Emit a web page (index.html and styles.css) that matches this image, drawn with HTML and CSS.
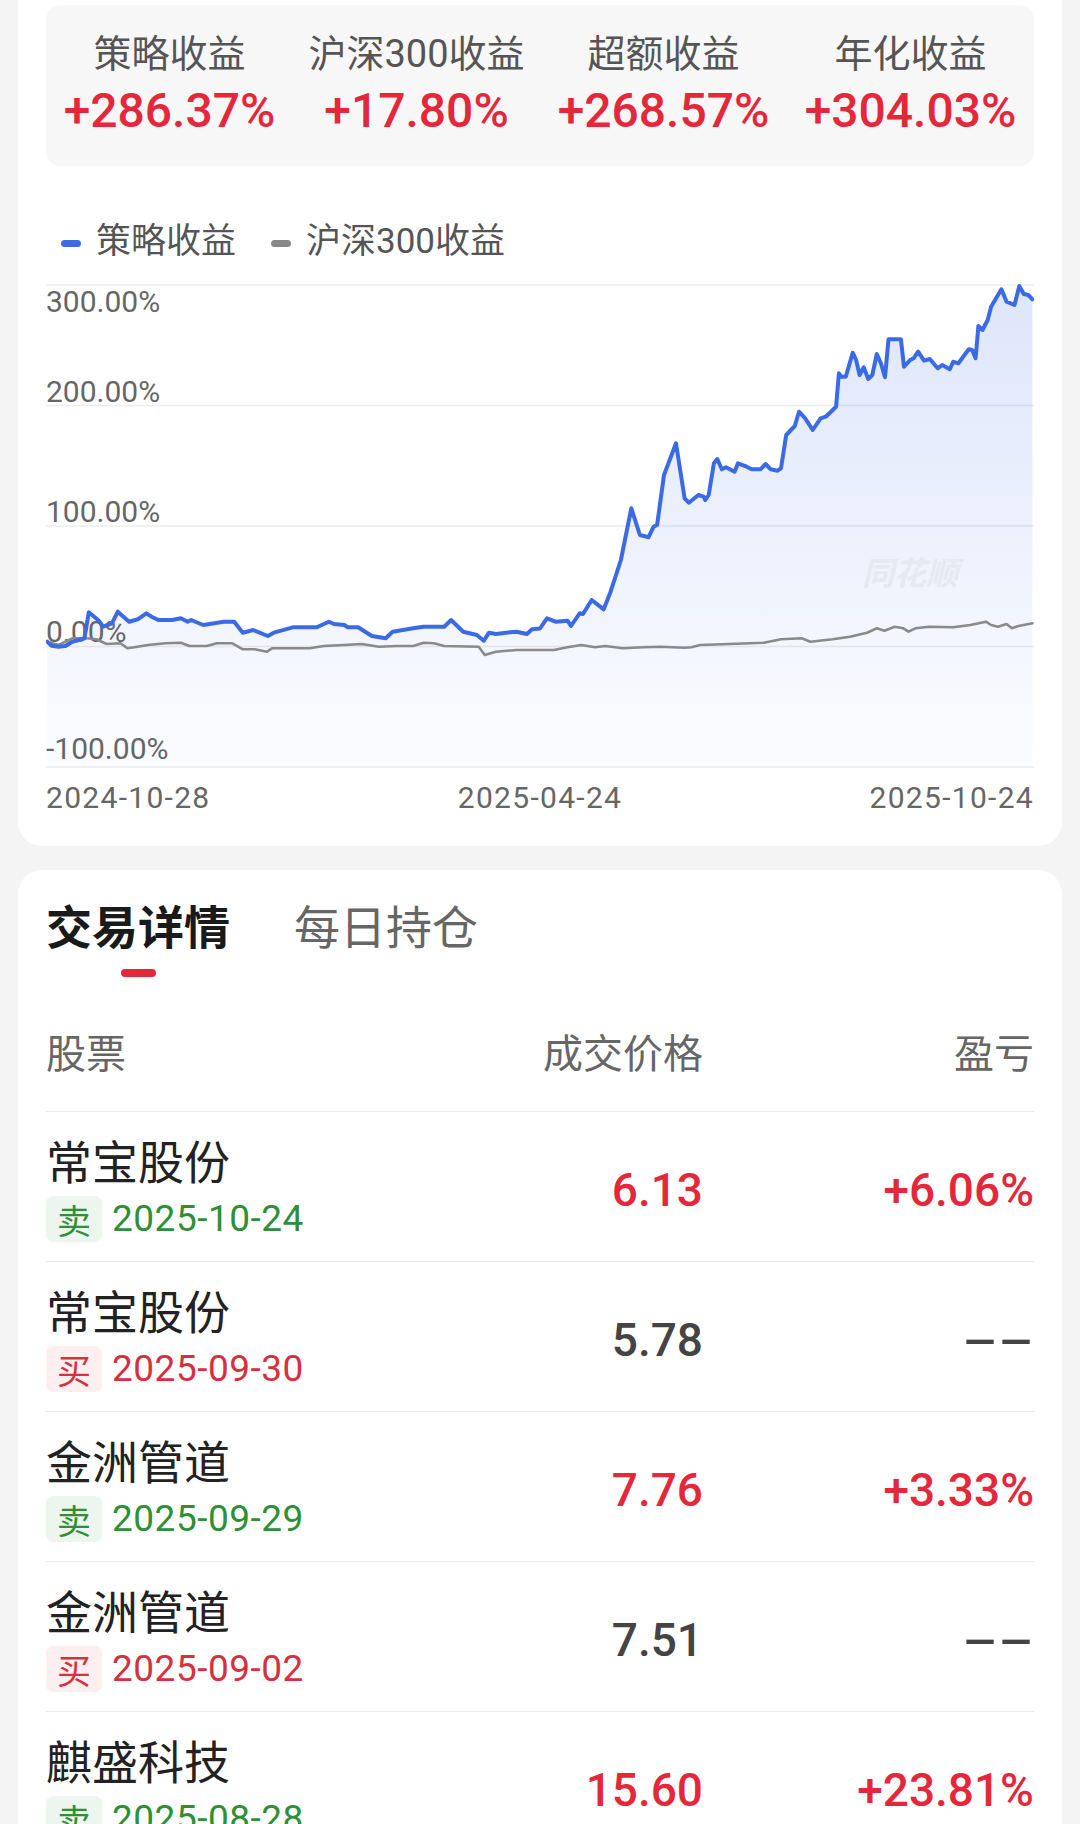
FILE: index.html
```html
<!DOCTYPE html>
<html lang="zh-CN">
<head>
<meta charset="utf-8">
<title>策略回测</title>
<link rel="stylesheet" href="styles.css">
</head>
<body>
<div class="page">
  <section class="card card-chart">
    <div class="stats">
      <div class="stat"><div class="stat-label">策略收益</div><div class="stat-value">+286.37%</div></div>
      <div class="stat"><div class="stat-label">沪深300收益</div><div class="stat-value">+17.80%</div></div>
      <div class="stat"><div class="stat-label">超额收益</div><div class="stat-value">+268.57%</div></div>
      <div class="stat"><div class="stat-label">年化收益</div><div class="stat-value">+304.03%</div></div>
    </div>
    <div class="legend">
      <span class="legend-item"><i class="swatch swatch-blue"></i>策略收益</span>
      <span class="legend-item"><i class="swatch swatch-gray"></i>沪深300收益</span>
    </div>
    <div class="chart">
      <svg viewBox="0 0 988 508" width="988" height="508" xmlns="http://www.w3.org/2000/svg">
        <defs>
          <linearGradient id="fillGrad" x1="0" y1="21" x2="0" y2="503" gradientUnits="userSpaceOnUse">
            <stop offset="0" stop-color="#3a6ae6" stop-opacity="0.17"/>
            <stop offset="1" stop-color="#3a6ae6" stop-opacity="0.02"/>
          </linearGradient>
        </defs>
        <g class="grid">
          <line x1="0" y1="21" x2="988" y2="21"/>
          <line x1="0" y1="141.5" x2="988" y2="141.5"/>
          <line x1="0" y1="262" x2="988" y2="262"/>
          <line x1="0" y1="382.5" x2="988" y2="382.5"/>
          <line x1="0" y1="503" x2="988" y2="503"/>
        </g>
        <g class="axis">
          <text x="0" y="48">300.00%</text>
          <text x="0" y="138">200.00%</text>
          <text x="0" y="258">100.00%</text>
          <text x="0" y="378">0.00%</text>
          <text x="0" y="495">-100.00%</text>
        </g>
        <path class="area" d="M1.2,377.7 L5.7,381.7 L12.5,382.7 L19.4,382 L26.3,377.7 L33.2,376 L38.4,374.3 L42.8,348.3 L52.1,356 L57.3,362.7 L65.9,359.3 L71.8,347.7 L83.1,357.7 L91.7,355.3 L100.3,349.3 L105.5,352.7 L112.4,356 L126.2,356 L134.8,354.3 L141.7,357.7 L145.1,356 L157.2,361 L177.8,357.7 L188.2,357.7 L196.8,368.7 L207.1,366 L221.9,372 L227.8,368.7 L246.7,363.3 L270.8,363.3 L282.9,357.7 L288,360 L298.4,361 L301.8,363.3 L312.1,363.3 L325.9,372 L339.7,374.3 L346.6,367.7 L356.9,366 L367.2,364.3 L377.6,362.7 L398.2,362.7 L405.1,356 L417.2,367.7 L430.9,371 L437.8,376.7 L443,368.7 L449.9,370 L460.2,368.7 L470.5,367.7 L480.9,370 L486,365.3 L494,364.5 L500.9,354.3 L509.5,357.7 L521.5,356.7 L525,362 L533.6,349.3 L537,350 L545.7,336 L557.7,345.3 L564.6,327.7 L574.9,296 L585.3,244.3 L593.9,271 L602.5,273.3 L607.6,262.7 L611.1,261 L618,211 L630,179.3 L638.6,234.3 L642.8,238.7 L652.4,231 L657.6,232.7 L659.3,236 L662.7,231 L667.9,199.3 L671.3,195 L675.8,205.3 L680,203.3 L688.6,207.7 L692,199.3 L700.6,202.7 L705.8,205.3 L714.4,205.3 L719.6,200 L724.7,205.3 L731.6,206.7 L735,204.3 L740.2,171 L748.8,162 L753,147.7 L759.2,154.3 L766.7,166 L774.6,154.3 L779.8,152.7 L790.1,142.7 L792.9,109.3 L795.3,112.7 L799.8,112.7 L806.7,88.7 L810.1,96 L813.6,111 L817.7,103.3 L822.2,115 L826.3,111 L830.8,90 L834.9,99.3 L839,113.3 L842.5,75.3 L854.9,75.3 L858,102.7 L864.2,96 L867.6,94.3 L872.1,87.7 L878,96.7 L883.8,95 L891.7,104.3 L896.2,101 L903.8,105.3 L907.2,97.7 L912.4,99.3 L922.7,85.3 L926.2,86 L929.6,94.3 L932.4,62 L936.5,66 L941.7,56 L945.1,42.7 L955.4,25.3 L960.6,37.7 L968.5,41 L973.3,22 L977.8,30 L982.3,31 L986.4,35.3 L986.4,503 L1.2,503 Z"/>
        <text class="watermark" x="816" y="321">同花顺</text>
        <polyline class="line-gray" points="1.2,377.7 12.5,381 26.3,374.3 40.1,374.3 50.4,375.3 60.7,380 74.5,379.3 81.4,384.3 88.3,383.3 102,381 119.3,379.3 134.8,378.7 143.4,382 160.6,382 170.9,379.3 186.4,379.3 196.8,385.3 208.8,385.3 220.9,387.7 226,384.3 263.9,384.3 277.7,382 298.4,381 315.6,380 332.8,382.7 350,382 367.2,382 377.6,378.7 387.9,379.3 398.2,382 432.7,382.7 438.8,391 449.9,387.7 470.5,386 494,386 507.8,386 521.5,383.3 535.3,381 549.1,383.3 559.4,382 576.6,384.3 597.3,383.3 614.5,382.7 638.6,383.7 645.5,383.3 654.1,381 683.4,380 717.8,378.7 735,375.3 755.7,374.3 764.3,377.7 786.7,375.3 803.9,372.7 821.1,368.7 830.8,364.3 838.4,366.7 848.7,362.7 857.3,364.3 862.5,367.7 869.4,364.3 883.1,362.7 907.2,363.3 924.4,361 939.9,357.7 945.1,361 952,362.7 960.6,360 965.8,364.3 972.6,362 986.4,359.3"/>
        <polyline class="line-blue" points="1.2,377.7 5.7,381.7 12.5,382.7 19.4,382 26.3,377.7 33.2,376 38.4,374.3 42.8,348.3 52.1,356 57.3,362.7 65.9,359.3 71.8,347.7 83.1,357.7 91.7,355.3 100.3,349.3 105.5,352.7 112.4,356 126.2,356 134.8,354.3 141.7,357.7 145.1,356 157.2,361 177.8,357.7 188.2,357.7 196.8,368.7 207.1,366 221.9,372 227.8,368.7 246.7,363.3 270.8,363.3 282.9,357.7 288,360 298.4,361 301.8,363.3 312.1,363.3 325.9,372 339.7,374.3 346.6,367.7 356.9,366 367.2,364.3 377.6,362.7 398.2,362.7 405.1,356 417.2,367.7 430.9,371 437.8,376.7 443,368.7 449.9,370 460.2,368.7 470.5,367.7 480.9,370 486,365.3 494,364.5 500.9,354.3 509.5,357.7 521.5,356.7 525,362 533.6,349.3 537,350 545.7,336 557.7,345.3 564.6,327.7 574.9,296 585.3,244.3 593.9,271 602.5,273.3 607.6,262.7 611.1,261 618,211 630,179.3 638.6,234.3 642.8,238.7 652.4,231 657.6,232.7 659.3,236 662.7,231 667.9,199.3 671.3,195 675.8,205.3 680,203.3 688.6,207.7 692,199.3 700.6,202.7 705.8,205.3 714.4,205.3 719.6,200 724.7,205.3 731.6,206.7 735,204.3 740.2,171 748.8,162 753,147.7 759.2,154.3 766.7,166 774.6,154.3 779.8,152.7 790.1,142.7 792.9,109.3 795.3,112.7 799.8,112.7 806.7,88.7 810.1,96 813.6,111 817.7,103.3 822.2,115 826.3,111 830.8,90 834.9,99.3 839,113.3 842.5,75.3 854.9,75.3 858,102.7 864.2,96 867.6,94.3 872.1,87.7 878,96.7 883.8,95 891.7,104.3 896.2,101 903.8,105.3 907.2,97.7 912.4,99.3 922.7,85.3 926.2,86 929.6,94.3 932.4,62 936.5,66 941.7,56 945.1,42.7 955.4,25.3 960.6,37.7 968.5,41 973.3,22 977.8,30 982.3,31 986.4,35.3"/>
      </svg>
    </div>
    <div class="dates"><span>2024-10-28</span><span>2025-04-24</span><span>2025-10-24</span></div>
  </section>

  <section class="card card-trades">
    <div class="tabs">
      <div class="tab tab-active">交易详情</div>
      <div class="tab">每日持仓</div>
    </div>
    <div class="thead">
      <div>股票</div>
      <div class="right">成交价格</div>
      <div class="right">盈亏</div>
    </div>

    <div class="trow sell">
      <div class="stock">
        <div class="name">常宝股份</div>
        <div class="meta"><span class="tag">卖</span><span class="date">2025-10-24</span></div>
      </div>
      <div class="num up">6.13</div>
      <div class="num up">+6.06%</div>
    </div>

    <div class="trow buy">
      <div class="stock">
        <div class="name">常宝股份</div>
        <div class="meta"><span class="tag">买</span><span class="date">2025-09-30</span></div>
      </div>
      <div class="num flat">5.78</div>
      <div class="num flat"><span class="dash">--</span></div>
    </div>

    <div class="trow sell">
      <div class="stock">
        <div class="name">金洲管道</div>
        <div class="meta"><span class="tag">卖</span><span class="date">2025-09-29</span></div>
      </div>
      <div class="num up">7.76</div>
      <div class="num up">+3.33%</div>
    </div>

    <div class="trow buy">
      <div class="stock">
        <div class="name">金洲管道</div>
        <div class="meta"><span class="tag">买</span><span class="date">2025-09-02</span></div>
      </div>
      <div class="num flat">7.51</div>
      <div class="num flat"><span class="dash">--</span></div>
    </div>

    <div class="trow sell">
      <div class="stock">
        <div class="name">麒盛科技</div>
        <div class="meta"><span class="tag">卖</span><span class="date">2025-08-28</span></div>
      </div>
      <div class="num up">15.60</div>
      <div class="num up">+23.81%</div>
    </div>
  </section>
</div>
</body>
</html>
```

FILE: styles.css
```css
html, body {
  margin: 0;
  padding: 0;
  overflow: hidden;
}

body {
  background: #f4f4f4;
  font-family: Roboto, "Noto Sans CJK SC", sans-serif;
  color: #222;
}

.page {
  width: 1080px;
  box-sizing: border-box;
  padding: 0 18px;
}

.card {
  background: #fff;
  border-radius: 24px;
}

/* ---------- chart card ---------- */
.card-chart {
  border-radius: 0 0 24px 24px;
  padding: 5px 28px 30px;
}

.stats {
  display: grid;
  grid-template-columns: repeat(4, 1fr);
  background: #f7f7f7;
  border-radius: 14px;
  padding: 27px 0;
  height: 161px;
  box-sizing: border-box;
}

.stat {
  text-align: center;
}

.stat-label {
  font-size: 38px;
  line-height: 44px;
  color: #555;
}

.stat-value {
  font-size: 48px;
  line-height: 56px;
  margin-top: 7px;
  font-weight: 500;
  color: #e4273b;
}

.legend {
  display: flex;
  gap: 20px;
  margin-top: 54px;
  font-size: 35px;
  line-height: 44px;
  color: #555;
}

.legend-item {
  display: flex;
  align-items: center;
  gap: 15px;
  padding-left: 15px;
}

.swatch {
  display: block;
  width: 20px;
  height: 7px;
  border-radius: 4px;
  margin-top: 3px;
}

.swatch-blue { background: #3a6ae6; }
.swatch-gray { background: #888; }

.chart svg {
  display: block;
  width: 988px;
  height: 508px;
}

.grid line {
  stroke: #ececec;
  stroke-width: 1.5;
}

.axis text {
  font-family: Roboto, sans-serif;
  font-size: 30px;
  fill: #666;
}

.area {
  fill: url(#fillGrad);
}

.watermark {
  font-family: "Noto Sans CJK SC", sans-serif;
  font-size: 32px;
  font-weight: 700;
  font-style: italic;
  fill: #e6e9f1;
}

.line-blue {
  fill: none;
  stroke: #3a6ae6;
  stroke-width: 4;
  stroke-linejoin: round;
  stroke-linecap: round;
}

.line-gray {
  fill: none;
  stroke: #8a8a8a;
  stroke-width: 2.6;
  stroke-linejoin: round;
  stroke-linecap: round;
}

.dates {
  display: flex;
  justify-content: space-between;
  margin-top: 8px;
  font-size: 30px;
  line-height: 36px;
  letter-spacing: 1.3px;
  color: #666;
}

/* ---------- trades card ---------- */
.card-trades {
  margin-top: 24px;
  padding: 30px 28px 0;
}

.tabs {
  display: flex;
  align-items: flex-start;
  gap: 64px;
  font-size: 46px;
  line-height: 56px;
}

.tab {
  display: flex;
  flex-direction: column;
  align-items: center;
  color: #666;
}

.tab-active {
  color: #1a1a1a;
  font-weight: 700;
}

.tab-active::after {
  content: "";
  width: 35px;
  height: 8px;
  border-radius: 4px;
  background: #e4273b;
  margin-top: 13px;
}

.thead,
.trow {
  display: grid;
  grid-template-columns: 1fr 240px 331px;
}

.thead {
  margin-top: 54px;
  padding-bottom: 32px;
  border-bottom: 1px solid #ebebeb;
  font-size: 40px;
  line-height: 48px;
  color: #666;
}

.right {
  text-align: right;
}

.trow {
  align-items: center;
  padding: 25px 0 19px;
}

.trow + .trow {
  border-top: 1px solid #ebebeb;
}

.name {
  font-size: 46px;
  line-height: 52px;
  color: #222;
}

.meta {
  display: flex;
  align-items: center;
  margin-top: 7px;
}

.tag {
  width: 56px;
  height: 46px;
  border-radius: 7px;
  display: flex;
  align-items: center;
  justify-content: center;
  font-size: 34px;
}

.date {
  margin-left: 10px;
  font-size: 37px;
  line-height: 46px;
  letter-spacing: 0.5px;
}

.sell .tag { background: #ecf6ee; color: #2e8f36; }
.sell .date { color: #2e8f36; }
.buy .tag { background: #fdeef0; color: #d6303f; }
.buy .date { color: #d6303f; }

.num {
  text-align: right;
  font-size: 46px;
  line-height: 56px;
  font-weight: 500;
}

.up { color: #e4273b; }
.flat { color: #444; }

.dash {
  display: inline-block;
  letter-spacing: 0;
  transform: scaleX(2.3);
  transform-origin: right center;
}
```
